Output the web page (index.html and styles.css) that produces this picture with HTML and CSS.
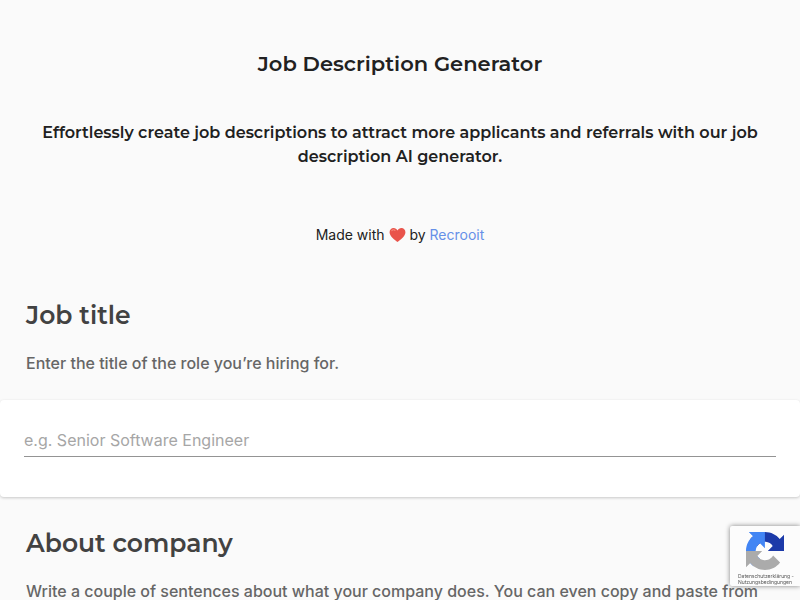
FILE: index.html
```html
<!DOCTYPE html>
<html lang="en">
<head>
<meta charset="utf-8">
<meta name="viewport" content="width=device-width, initial-scale=1">
<title>Job Description Generator</title>
<link rel="stylesheet" href="styles.css">
</head>
<body>
<header class="hero">
  <h1>Job Description Generator</h1>
  <h2>Effortlessly create job descriptions to attract more applicants and referrals with our job description AI generator.</h2>
  <p class="credit">Made with <svg class="heart" viewBox="0 0 18 16" role="img" aria-label="love"><path d="M9 15.5C6.5 13.7.6 9.8.6 5.2.6 2.4 2.5.7 4.8.7 6.700.7 8.200 1.700 9 3.300 9.800 1.700 11.300.7 13.200.7c2.300 0 4.200 1.700 4.200 4.500 0 4.600-5.900 8.500-8.400 10.300z" fill="#e9544b"/><path d="M3 3.300c1-1 2.500-.9 3.300-.1" fill="none" stroke="#f58a7d" stroke-width="1.200" stroke-linecap="round"/></svg> by <a href="#recrooit">Recrooit</a></p>
</header>
<main>
  <section>
    <div class="intro">
      <h3><label for="title">Job title</label></h3>
      <p>Enter the title of the role you’re hiring for.</p>
    </div>
    <div class="card">
      <input id="title" type="text" placeholder="e.g. Senior Software Engineer">
    </div>
  </section>
  <section>
    <div class="intro">
      <h3>About company</h3>
      <p>Write a couple of sentences about what your company does. You can even copy and paste from</p>
    </div>
  </section>
</main>
<aside class="badge">
  <svg class="logo" viewBox="0 0 64 64" aria-hidden="true">
    <path d="M64 31.955l-.033-1.370V4.687l-7.160 7.160C50.948 4.674 42.033.093 32.050.093c-10.400 0-19.622 4.960-25.458 12.640l11.736 11.860a15.550 15.550 0 0 1 4.754-5.334c2.050-1.600 4.952-2.906 8.968-2.906.485 0 .860.057 1.135.163 4.976.393 9.288 3.140 11.828 7.124l-8.307 8.307z" fill="#1c3aa9"/>
    <path d="M31.862.094l-1.370.033H4.594l7.160 7.160C4.580 13.147 0 22.060 0 32.046c0 10.400 4.960 19.622 12.640 25.458L24.500 45.768a15.550 15.550 0 0 1-5.334-4.754c-1.600-2.050-2.906-4.952-2.906-8.968 0-.485.057-.860.163-1.135.393-4.976 3.140-9.288 7.124-11.828l8.307 8.307z" fill="#4285f4"/>
    <path d="M0 32.045l.033 1.370v25.898l7.160-7.160c5.860 7.173 14.774 11.754 24.760 11.754 10.400 0 19.622-4.960 25.458-12.640l-11.736-11.860a15.550 15.550 0 0 1-4.754 5.334c-2.050 1.600-4.952 2.906-8.968 2.906-.485 0-.860-.057-1.135-.163-4.976-.393-9.288-3.140-11.828-7.124l8.307-8.307z" fill="#ababab"/>
  </svg>
  <small><a href="#privacy">Datenschutzerklärung</a> -<br><a href="#terms">Nutzungsbedingungen</a></small>
</aside>
</body>
</html>
```
FILE: styles.css
```css
* {
  box-sizing: border-box;
}

body {
  margin: 0;
  background: #fafafa;
  color: #212121;
  font-family: Inter, "Liberation Sans", sans-serif;
  font-size: 16px;
  line-height: 24px;
}

h1,
h2,
h3,
p {
  margin: 0;
}

h1,
h2,
h3 {
  font-family: Montserrat, Inter, sans-serif;
  font-weight: 600;
}

.hero {
  display: flex;
  flex-direction: column;
  align-items: center;
  padding: 48px 24px;
  text-align: center;
}

h1 {
  font-size: 21px;
  line-height: 32px;
}

h2 {
  max-width: 736px;
  margin-top: 41px;
  font-size: 16px;
}

.credit {
  margin-top: 54px;
  font-size: 14px;
}

.credit a {
  color: #6690e8;
  text-decoration: none;
}

.heart {
  width: 17px;
  height: 16px;
  vertical-align: -3px;
}

.intro {
  padding: 4px 26px 25px;
  color: #666;
  font-weight: 500;
}

h3 {
  margin-bottom: 20px;
  color: #424242;
  font-size: 25px;
  line-height: 32px;
}

.card {
  margin-bottom: 26px;
  padding: 24px 24px 40px;
  border-radius: 4px;
  background: #fff;
  box-shadow: 0 1px 3px rgba(0, 0, 0, 0.2);
}

.card input {
  display: block;
  width: 100%;
  height: 33px;
  padding: 0;
  border: 0;
  border-bottom: 1px solid #949494;
  outline: 0;
  background: transparent;
  color: #212121;
  font: inherit;
}

.card input::placeholder {
  color: #a6a6a6;
  opacity: 1;
}

.badge {
  position: fixed;
  right: 0;
  bottom: 14px;
  width: 70px;
  height: 60px;
  padding: 6px 0 0 8px;
  overflow: hidden;
  border-radius: 2px 0 0 2px;
  background: #fcfcfc;
  box-shadow: 0 0 5px #808080;
}

.logo {
  display: block;
  width: 38px;
  height: 38px;
  margin-left: 8px;
}

.badge small {
  display: block;
  margin-top: 3px;
  color: #555;
  font-family: Inter, sans-serif;
  font-size: 5px;
  line-height: 6px;
  white-space: nowrap;
}

.badge a {
  color: inherit;
  text-decoration: none;
}
```
